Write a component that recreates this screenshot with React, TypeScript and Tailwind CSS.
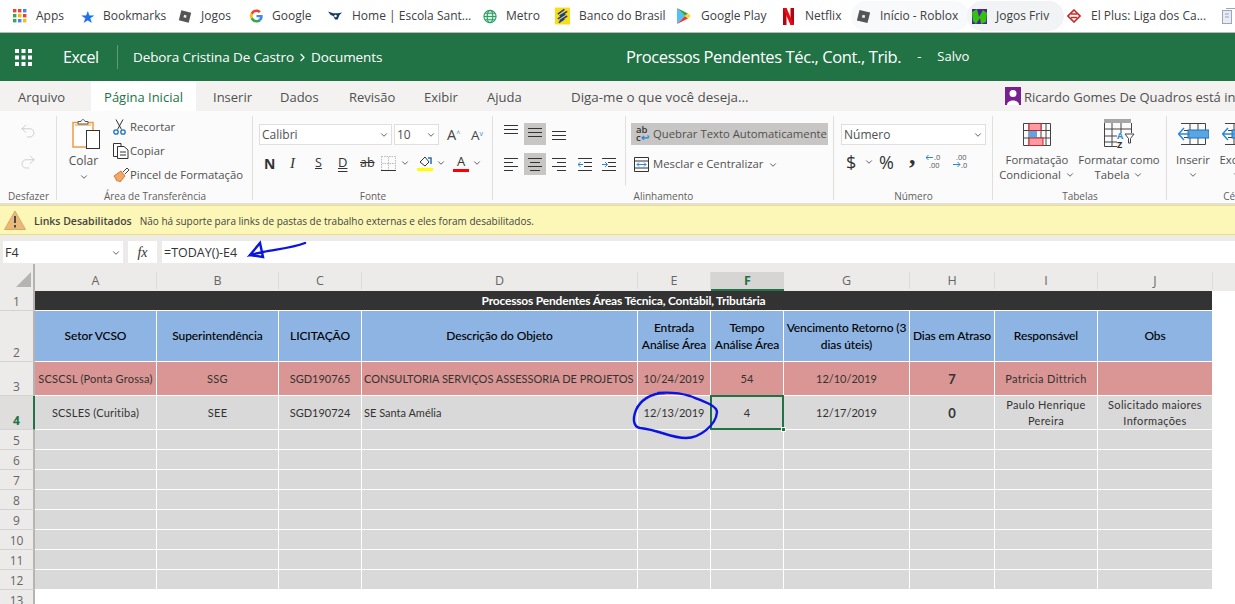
import { ChevronDown, ChevronRight, Redo2, Undo2 } from "lucide-react";
import type { ReactNode } from "react";

const ui = "font-['Open_Sans','Noto_Sans',sans-serif]";
const calibri = "font-['Lato','Liberation_Sans',sans-serif]";

const Chev = ({ className = "" }: { className?: string }) => (
  <ChevronDown size={10} strokeWidth={2} className={`shrink-0 text-[#444] ${className}`} />
);

const AppsDots = () => (
  <svg width="14" height="14" viewBox="0 0 14 14">
    {["#ea4335", "#ea4335", "#4285f4", "#34a853", "#fbbc04", "#ea4335", "#34a853", "#4285f4", "#fbbc04"].map((c, i) => (
      <rect key={i} x={(i % 3) * 5} y={Math.floor(i / 3) * 5} width="3.4" height="3.4" fill={c} />
    ))}
  </svg>
);

const RobloxIcon = () => (
  <svg width="17" height="17" viewBox="0 0 17 17">
    <path d="M4 1 16 4 13 16 1 13Z" fill="#555" />
    <path d="M7.5 6.5 10.5 7.3 9.7 10.3 6.7 9.5Z" fill="#eee" />
  </svg>
);

const GoogleIcon = () => (
  <svg width="14" height="14" viewBox="0 0 48 48">
    <path fill="#ea4335" d="M24 9.5c3.5 0 6.700 1.300 9.100 3.500l6.800-6.800C35.800 2.400 30.200 0 24 0 14.600 0 6.500 5.400 2.600 13.200l7.900 6.200C12.400 13.600 17.700 9.500 24 9.500z" />
    <path fill="#4285f4" d="M46.900 24.500c0-1.600-.1-3.100-.4-4.500H24v9h12.900c-.6 3-2.300 5.500-4.800 7.200l7.700 6c4.500-4.200 7.100-10.300 7.100-17.700z" />
    <path fill="#fbbc05" d="M10.500 28.600c-.5-1.400-.8-3-.8-4.600s.3-3.200.8-4.600l-7.900-6.200C.9 16.500 0 20.100 0 24s.9 7.500 2.600 10.800l7.900-6.200z" />
    <path fill="#34a853" d="M24 48c6.500 0 11.900-2.100 15.900-5.800l-7.700-6c-2.200 1.400-4.900 2.300-8.200 2.300-6.300 0-11.600-4.200-13.500-9.900l-7.900 6.200C6.500 42.600 14.600 48 24 48z" />
  </svg>
);

const SchoolIcon = () => (
  <svg width="17" height="12" viewBox="0 0 17 12">
    <path d="M0 1 6 3 9 3 11 3 16 2 13 5 11 10 8 10 6 6 3 5Z" fill="#1c3a66" />
    <circle cx="8.500" cy="6" r="1.500" fill="#fff" />
  </svg>
);

const GlobeIcon = () => (
  <svg width="15" height="15" viewBox="0 0 15 15" fill="none" stroke="#2e9e68" strokeWidth="1.200">
    <circle cx="7.500" cy="7.500" r="6.500" fill="#d8efe2" />
    <ellipse cx="7.500" cy="7.500" rx="3" ry="6.500" />
    <path d="M1 7.500H14M2 4H13M2 11H13" />
  </svg>
);

const BBIcon = () => (
  <svg width="16" height="18" viewBox="0 0 16 18">
    <rect width="16" height="18" fill="#f9dd16" />
    <path d="M3 7 10 2M5 9 13 4M3 12 11 7M5 14 13 9M4 16 10 12" stroke="#1c3f94" strokeWidth="1.600" />
  </svg>
);

const PlayIcon = () => (
  <svg width="14" height="16" viewBox="0 0 14 16">
    <path d="M0 0 8 8 0 16Z" fill="#4fc3f7" />
    <path d="M0 0 11 5.500 8 8Z" fill="#43a047" />
    <path d="M0 16 11 10.500 8 8Z" fill="#e53935" />
    <path d="M11 5.500 14 8 11 10.500 8 8Z" fill="#fdd835" />
  </svg>
);

const NetflixIcon = () => (
  <svg width="11" height="17" viewBox="0 0 11 17">
    <path d="M0 0H3.500V17H0ZM7.500 0H11V17H7.500Z" fill="#b1060f" />
    <path d="M0 0H3.500L11 17H7.500Z" fill="#e50914" />
  </svg>
);

const FrivIcon = () => (
  <svg width="15" height="15" viewBox="0 0 15 15">
    <rect width="15" height="15" fill="#4b1fa8" />
    <path d="M0 3 5 0 7 8 11 1 15 4 14 13 9 15 8 9 4 15 1 12Z" fill="#35c20c" />
  </svg>
);

const ElPlusIcon = () => (
  <svg width="14" height="14" viewBox="0 0 14 14" fill="none" stroke="#c62828" strokeWidth="1.600">
    <path d="M7 1 13 7 7 13 1 7Z" />
    <path d="M4 5H10M4 8.500H10" />
  </svg>
);

const DocIcon = () => (
  <svg width="14" height="16" viewBox="0 0 14 16" fill="none" stroke="#9aa6b8">
    <rect x="0.500" y="2.500" width="9" height="13" fill="#e8ecf2" />
    <path d="M4 .5H13.500V13M3 6H7M3 9H7" />
  </svg>
);

const bookmarks: { label?: string; icon: ReactNode; w: string; slot: string; pill?: string }[] = [
  { label: "Apps", icon: <AppsDots />, w: "w-[67px]", slot: "w-[14px]" },
  { label: "Bookmarks", icon: <span className="w-[14px] text-center text-[17px] leading-none text-[#1a73e8]">★</span>, w: "w-[98px]", slot: "w-[14px]" },
  { label: "Jogos", icon: <RobloxIcon />, w: "w-[72px]", slot: "w-[14px]" },
  { label: "Google", icon: <GoogleIcon />, w: "w-[78px]", slot: "w-[13px]" },
  { label: "Home | Escola Sant...", icon: <SchoolIcon />, w: "w-[155px]", slot: "w-[15px]" },
  { label: "Metro", icon: <GlobeIcon />, w: "w-[72px]", slot: "w-[14px]" },
  { label: "Banco do Brasil", icon: <BBIcon />, w: "w-[122px]", slot: "w-[15px]" },
  { label: "Google Play", icon: <PlayIcon />, w: "w-[106px]", slot: "w-[15px]" },
  { label: "Netflix", icon: <NetflixIcon />, w: "w-[73px]", slot: "w-[13px]" },
  { label: "Início - Roblox", icon: <RobloxIcon />, w: "w-[116px]", slot: "w-[15px]", pill: "bg-[#f8f9fa]" },
  { label: "Jogos Friv", icon: <FrivIcon />, w: "w-[95px]", slot: "w-[15px]", pill: "bg-[#f1f3f4]" },
  { label: "El Plus: Liga dos Ca...", icon: <ElPlusIcon />, w: "w-[155px]", slot: "w-[15px]" },
  { icon: <DocIcon />, w: "w-[20px]", slot: "w-[14px]" },
];

function BookmarkBar() {
  return (
    <div className={`flex h-[33px] items-center overflow-hidden border-b border-[#b9b9bb] bg-white pl-[13px] text-[12px] text-[#3c4043] ${ui}`}>
      {bookmarks.map((b, i) => (
        <div key={i} className={`relative flex shrink-0 items-center gap-[9px] ${b.w}`}>
          {b.pill && <span className={`absolute -left-[5px] -top-[6px] bottom-[-6px] right-[3px] rounded-full ${b.pill}`} />}
          <span className={`relative flex h-[18px] items-center ${b.slot}`}>{b.icon}</span>
          {b.label && <span className="relative whitespace-nowrap">{b.label}</span>}
        </div>
      ))}
    </div>
  );
}

function Waffle() {
  return (
    <svg width="17" height="17" viewBox="0 0 17 17" fill="#fff">
      {[0, 1, 2, 3, 4, 5, 6, 7, 8].map((i) => (
        <rect key={i} x={(i % 3) * 6.500} y={Math.floor(i / 3) * 6.500} width="4" height="4" />
      ))}
    </svg>
  );
}

function AppHeader() {
  return (
    <div className={`flex h-[48px] items-center bg-[#217346] text-white ${ui}`}>
      <div className="ml-[15px] flex w-[48px]"><Waffle /></div>
      <span className="w-[54px] text-[16px] tracking-[-0.5px]">Excel</span>
      <span className="h-[24px] w-px bg-[#5d9a79]" />
      <span className="ml-[15px] whitespace-nowrap text-[13.500px] tracking-[-0.1px]">Debora Cristina De Castro</span>
      <ChevronRight size={13} className="mx-[2px]" />
      <span className="w-[315px] text-[13.500px] tracking-[-0.1px]">Documents</span>
      <span className="whitespace-nowrap text-[16.500px] tracking-[-0.4px]">Processos Pendentes Téc., Cont., Trib.</span>
      <span className="ml-[16px] text-[13px]">-</span>
      <span className="ml-[16px] text-[13px]">Salvo</span>
    </div>
  );
}

function TabBar() {
  const tabs = [
    ["Arquivo", "w-[91px] pl-[18px]"],
    ["Página Inicial", "w-[105px] justify-center bg-white text-[#217346]"],
    ["Inserir", "w-[84px] pl-[17px]"],
    ["Dados", "w-[69px]"],
    ["Revisão", "w-[75px]"],
    ["Exibir", "w-[63px]"],
    ["Ajuda", "w-[84px]"],
  ];
  return (
    <div className={`flex h-[30px] items-center overflow-hidden bg-[#f3f2f1] text-[13px] text-[#505050] ${ui}`}>
      {tabs.map(([t, c]) => (
        <div key={t} className={`flex h-full shrink-0 items-center pt-[3px] ${c}`}>{t}</div>
      ))}
      <span className="mt-[3px] w-[434px] shrink-0 whitespace-nowrap text-[13.400px]">Diga-me o que você deseja...</span>
      <svg width="16" height="18" viewBox="0 0 16 18" className="shrink-0">
        <rect width="16" height="18" fill="#7a1f91" />
        <circle cx="8" cy="6.500" r="3.500" fill="#fff" />
        <path d="M2 18C2 12 14 12 14 18Z" fill="#fff" />
      </svg>
      <span className="ml-[3px] mt-[3px] whitespace-nowrap">Ricardo Gomes De Quadros está in</span>
    </div>
  );
}

function Group({ w, label, children, line = true }: { w: string; label: string; children: ReactNode; line?: boolean }) {
  return (
    <div className={`relative flex h-full shrink-0 flex-col ${w}`}>
      <div className="h-[78px]">{children}</div>
      <div className="whitespace-nowrap text-center text-[10px] leading-[14px] text-[#605e5c]">{label}</div>
      {line && <span className="absolute bottom-[3px] right-0 top-[5px] w-px bg-[#e1dfdd]" />}
    </div>
  );
}

const Lines = ({ rows }: { rows: [number, number][] }) => (
  <svg width="14" height="14" viewBox="0 0 14 14" stroke="#333">
    {rows.map(([a, b], i) => (
      <path key={i} d={`M${a} ${i * 4 + 1.500}H${b}`} />
    ))}
  </svg>
);

const ClipboardIcon = () => (
  <svg width="29" height="33" viewBox="0 0 29 33" fill="none">
    <path d="M1 4.500H21V29H1Z" fill="#fff" stroke="#ef9a45" strokeWidth="1.500" />
    <path d="M3 7H19" stroke="#f7c897" strokeWidth="2" />
    <path d="M6 6V3.500H9C9.500 1 12.500 1 13 3.500H16V6Z" fill="#fff" stroke="#555" />
    <rect x="14.500" y="12.500" width="13" height="18" fill="#fff" stroke="#333" />
  </svg>
);

const ScissorsIcon = () => (
  <svg width="13" height="16" viewBox="0 0 13 16" fill="none">
    <path d="M3 .5 8.500 10.500M10 .5 4.500 10.500" stroke="#333" />
    <circle cx="3" cy="13" r="2.200" stroke="#1d72bb" strokeWidth="1.300" />
    <circle cx="10" cy="13" r="2.200" stroke="#1d72bb" strokeWidth="1.300" />
  </svg>
);

const CopyIcon = () => (
  <svg width="16" height="16" viewBox="0 0 16 16" fill="none" stroke="#333">
    <path d="M4.500 13.500H.5V.5H8V3" />
    <path d="M4.500 3.500H11L15 7V15.500H4.500ZM7 9H13M7 12H13" fill="#fff" />
  </svg>
);

const BrushIcon = () => (
  <svg width="17" height="16" viewBox="0 0 17 16">
    <path d="M1 9 8 4 12 9 7 15C5 13 3 15 3 12Z" fill="#f2a868" stroke="#d9772a" />
    <path d="M10 5 14 1 16 3 12 7" fill="#fff" stroke="#444" />
  </svg>
);

function Clipboard() {
  return (
    <div className="flex pt-[7px]">
      <div className="flex w-[53px] flex-col items-center">
        <span className="ml-[5px] flex"><ClipboardIcon /></span>
        <span className="mt-[2px] text-[12px] leading-[16px] text-[#505050]">Colar</span>
        <Chev className="mt-[3px]" />
      </div>
      <div className="ml-[3px] flex flex-col gap-[7px] text-[11.300px] leading-[17px] text-[#505050]">
        {[
          [<ScissorsIcon key="s" />, "Recortar"],
          [<CopyIcon key="c" />, "Copiar"],
          [<BrushIcon key="b" />, "Pincel de Formatação"],
        ].map(([icon, label], i) => (
          <div key={i} className="flex items-center whitespace-nowrap">
            <span className="flex w-[17px]">{icon}</span>
            <span>{label}</span>
          </div>
        ))}
      </div>
    </div>
  );
}

function Select({ w, text }: { w: string; text: string }) {
  return (
    <div className={`flex h-[21px] items-center justify-between border border-[#e1dfdd] bg-white px-[2px] text-[12px] text-[#505050] ${w}`}>
      <span>{text}</span>
      <Chev />
    </div>
  );
}

function FontGroup() {
  return (
    <div className="pl-[6px] pt-[13px]">
      <div className="flex items-center">
        <Select w="w-[133px]" text="Calibri" />
        <Select w="w-[45px] ml-[2px]" text="10" />
        <span className="ml-[8px] w-[24px] text-[14.500px] leading-[18px] text-[#444]">A<sup className="text-[7px] text-[#2b88d8]">^</sup></span>
        <span className="text-[13.500px] leading-[18px] text-[#444]">A<sup className="text-[7px] text-[#2b88d8]">v</sup></span>
      </div>
      <div className="mt-[7px] flex h-[22px] items-center text-[#333]">
        <span className="w-[24px] pl-[5px] text-[14px] font-bold">N</span>
        <span className="w-[25px] pl-[7px] font-['Liberation_Serif',serif] text-[15px] italic">I</span>
        <span className="w-[24px] pl-[7px] text-[12.500px] underline">S</span>
        <span className="w-[24px] pl-[6px] text-[13px] underline decoration-double">D</span>
        <span className="w-[25px] pl-[4px] text-[12.500px] line-through">ab</span>
        <svg width="15" height="15" viewBox="0 0 15 15" fill="none" stroke="#bbb" strokeDasharray="1.500 1">
          <path d="M.5.5H14.500V14M.5.5V14M7.500 1V14M1 7.500H14" />
          <path d="M0 14.500H15" stroke="#333" strokeDasharray="none" />
        </svg>
        <Chev className="ml-[4px]" />
        <svg width="16" height="16" viewBox="0 0 16 16" className="ml-[7px]">
          <path d="M3 7 8 2 12 7 8 11Z" fill="#fff" stroke="#333" />
          <path d="M11 3 14 3 14 9" fill="none" stroke="#1d72bb" strokeWidth="1.500" />
          <rect x="0" y="13" width="16" height="3" fill="#ffff00" />
        </svg>
        <Chev className="ml-[3px]" />
        <div className="ml-[7px] flex w-[16px] flex-col items-center text-[13px] leading-[13px] text-[#333]">
          A
          <span className="mt-[1px] h-[3px] w-[16px] bg-[#ff0000]" />
        </div>
        <Chev className="ml-[3px]" />
      </div>
    </div>
  );
}

const alignCell = "flex h-[22px] w-[22px] items-center justify-center";

function AlignGroup() {
  const three: [number, number][] = [[0, 14], [0, 14], [0, 14]];
  const left: [number, number][] = [[0, 14], [0, 9], [0, 14], [0, 9]];
  const center: [number, number][] = [[0, 14], [2, 12], [0, 14], [2, 12]];
  const right: [number, number][] = [[0, 14], [5, 14], [0, 14], [5, 14]];
  const Indent = ({ flip, className }: { flip?: boolean; className: string }) => (
    <svg width="14" height="14" viewBox="0 0 14 14" fill="none" stroke="#333" className={className}>
      <path d="M0 1.500H14M6 5.500H14M6 9.500H14M0 13.500H14" />
      <path d={flip ? "M0 7.500H5M3 5 5.500 7.500 3 10" : "M5 7.500H0M2.500 5 0 7.500 2.500 10"} stroke="#2b88d8" />
    </svg>
  );
  return (
    <div className="relative flex pl-[11px] pt-[12px]">
      <div className="w-[127px]">
        <div className="flex h-[22px] items-center gap-[6px]">
          <div className="flex w-[14px] pb-[6px]"><Lines rows={three} /></div>
          <div className={`${alignCell} bg-[#c8c6c4]`}><Lines rows={three} /></div>
          <div className="flex w-[14px] pt-[6px]"><Lines rows={three} /></div>
        </div>
        <div className="mt-[8px] flex h-[22px] items-center gap-[6px]">
          <Lines rows={left} />
          <div className={`${alignCell} bg-[#c8c6c4]`}><Lines rows={center} /></div>
          <Lines rows={right} />
          <Indent className="ml-[6px]" />
          <Indent flip className="ml-[4px]" />
        </div>
      </div>
      <div className="flex flex-col text-[11.300px] text-[#505050]">
        <div className="flex h-[22px] w-[197px] items-center whitespace-nowrap bg-[#c8c6c4] pl-[5px]">
          <span className="w-[17px] text-[9.500px] font-semibold leading-[8px] text-[#333]">ab<br />c<span className="text-[#2b88d8]">↩</span></span>
          <span>Quebrar Texto Automaticamente</span>
        </div>
        <div className="mt-[8px] flex h-[22px] items-center whitespace-nowrap pl-[3px] pt-[1px]">
          <svg width="15" height="15" viewBox="0 0 15 15" fill="none" className="mr-[4px]">
            <path d="M.5.5H14.500V14.500H.5ZM.5 4H14.500M.5 11H14.500" stroke="#333" />
            <path d="M3 7.500H12M5 5.500 3 7.500 5 9.500M10 5.500 12 7.500 10 9.500" stroke="#2b88d8" />
          </svg>
          Mesclar e Centralizar
          <Chev className="ml-[5px]" />
        </div>
      </div>
      <span className="absolute left-[132px] top-[5px] h-[70px] w-px bg-[#e1dfdd]" />
    </div>
  );
}

const DecimalIcon = ({ more }: { more?: boolean }) => (
  <svg width="16" height="16" viewBox="0 0 16 16" fill="none" fontSize="7.500" fontFamily="'Open Sans',sans-serif">
    {more ? (
      <>
        <text x="3" y="6" fill="#555">.00</text>
        <path d="M0 10.500H7M4.500 8 7 10.500 4.500 13" stroke="#2b88d8" />
        <text x="8" y="14" fill="#555">.0</text>
      </>
    ) : (
      <>
        <path d="M7 3.500H0M2.500 1 0 3.500 2.500 6" stroke="#2b88d8" />
        <text x="8" y="6" fill="#555">.0</text>
        <text x="3" y="14" fill="#555">.00</text>
      </>
    )}
  </svg>
);

function NumberGroup() {
  return (
    <div className="pl-[7px] pt-[13px]">
      <Select w="w-[145px]" text="Número" />
      <div className="mt-[5px] flex h-[24px] items-center text-[#333]">
        <span className="ml-[5px] w-[18px] text-[18px]">$</span>
        <Chev />
        <span className="ml-[5px] w-[30px] text-[18px]">%</span>
        <span className="w-[17px] pb-[12px] font-['Liberation_Serif',serif] text-[26px] font-bold leading-[16px]">,</span>
        <DecimalIcon />
        <span className="w-[11px]" />
        <DecimalIcon more />
      </div>
    </div>
  );
}

const CondIcon = () => (
  <svg width="28" height="23" viewBox="0 0 28 23" fill="none">
    <path d="M.5.5H27.500V22.500H.5ZM.5 7.500H27.500M.5 15H27.500M6 .5V22.500M18 .5V22.500M23 .5V22.500" stroke="#444" />
    <rect x="6" y=".5" width="12" height="7" fill="#ff9aa2" stroke="#c72525" />
    <rect x="6" y="8" width="8" height="7" fill="#5aa5e2" />
    <rect x="6" y="15" width="14" height="7.500" fill="#ff9aa2" stroke="#c72525" />
  </svg>
);

const TableIcon = () => (
  <svg width="31" height="30" viewBox="0 0 31 30" fill="none">
    <rect x="0" y="0" width="27" height="4" fill="#a6a6a6" />
    <path d="M.5 4V27.500H13M27.500 4V14M.5 10H27M.5 17H13M.5 23H13M8 4V27M17 4V14" stroke="#444" />
    <path d="M21 15H30L26.500 19.500V24H24.500V19.500Z" stroke="#444" fill="#fff" />
    <text x="13" y="20" fontSize="9" fontWeight="700" fill="#2b88d8" fontFamily="'Open Sans',sans-serif">A</text>
    <text x="13" y="29" fontSize="9" fontWeight="700" fill="#333" fontFamily="'Open Sans',sans-serif">Z</text>
  </svg>
);

const InsertIcon = () => (
  <svg width="31" height="22" viewBox="0 0 31 22" fill="none">
    <path d="M3 .5H27.500V21.500H3M3 7.500H27.500M3 14.500H27.500M12 .5V21.500M20 .5V21.500" stroke="#444" />
    <rect x="10" y="7" width="21" height="8" fill="#5aa5e2" stroke="#1d72bb" />
    <path d="M12 11H1M6 5 .5 11 6 17" stroke="#2b88d8" strokeWidth="1.500" fill="#fff" />
  </svg>
);

function BigButton({ w, icon, lines }: { w: string; icon: ReactNode; lines: ReactNode[] }) {
  return (
    <div className={`flex shrink-0 flex-col items-center text-[11.300px] leading-[15px] text-[#505050] ${w}`}>
      <div className="mb-[2px] flex h-[32px] items-center justify-center">{icon}</div>
      {lines.map((l, i) => (
        <div key={i} className="flex items-center gap-[4px] whitespace-nowrap">{l}</div>
      ))}
    </div>
  );
}

function Ribbon() {
  return (
    <div className={`flex h-[94px] overflow-hidden border-b-2 border-[#e1dfdd] bg-[#fbfbfb] ${ui}`}>
      <Group w="w-[57px]" label="Desfazer">
        <div className="flex flex-col items-center gap-[13px] pr-[1px] pt-[11px] text-[#c8c6c4]">
          <Undo2 size={18} strokeWidth={1.100} />
          <Redo2 size={18} strokeWidth={1.100} />
        </div>
      </Group>
      <Group w="w-[196px]" label="Área de Transferência"><Clipboard /></Group>
      <Group w="w-[240px]" label="Fonte"><FontGroup /></Group>
      <Group w="w-[341px]" label="Alinhamento"><AlignGroup /></Group>
      <Group w="w-[159px]" label="Número"><NumberGroup /></Group>
      <Group w="w-[174px]" label="Tabelas">
        <div className="flex pt-[7px]">
          <BigButton w="w-[88px]" icon={<CondIcon />} lines={["Formatação", <>Condicional <Chev /></>]} />
          <BigButton w="w-[76px]" icon={<TableIcon />} lines={["Formatar como", <>Tabela <Chev /></>]} />
        </div>
      </Group>
      <Group w="w-[146px]" label="Células" line={false}>
        <div className="flex pt-[7px]">
          <BigButton w="w-[52px]" icon={<InsertIcon />} lines={["Inserir", <Chev key="c" className="mt-[3px]" />]} />
          <BigButton w="w-[36px]" icon={<InsertIcon />} lines={["Excluir", <Chev key="c" className="mt-[3px]" />]} />
        </div>
      </Group>
    </div>
  );
}

function Notice() {
  return (
    <div className={`flex h-[30px] items-center border-y border-[#ecdf7e] bg-[#fcf7b6] pl-[4px] text-[#444] ${ui}`}>
      <svg width="22" height="20" viewBox="0 0 22 20" className="mr-[8px]">
        <path d="M11 1 21.500 19.500H.5Z" fill="#e9b97a" stroke="#d9a766" strokeLinejoin="round" />
        <path d="M11 6V13M11 15V17.500" stroke="#4a4a4a" strokeWidth="2" />
      </svg>
      <b className="mr-[8px] mt-[3px] text-[10.500px] font-semibold">Links Desabilitados</b>
      <span className="mt-[3px] text-[10px]">Não há suporte para links de pastas de trabalho externas e eles foram desabilitados.</span>
    </div>
  );
}

function FormulaBar() {
  return (
    <div className={`flex h-[29px] items-end gap-[5px] bg-[#ecebea] pb-px pl-[3px] text-[12.500px] text-[#333] ${ui}`}>
      <div className="flex h-[22px] w-[120px] items-center justify-between bg-white px-[2px] pt-[2px]">
        F4 <Chev />
      </div>
      <div className="flex h-[22px] w-[29px] items-center justify-center bg-white font-['Liberation_Serif',serif] text-[14px] italic">fx</div>
      <div className="flex h-[22px] flex-1 items-center bg-white pl-[2px] pt-[3px]">=TODAY()-E4</div>
    </div>
  );
}

const columns = "grid-cols-[35px_122px_122px_83px_276px_73px_73px_126px_85px_103px_115px_23px]";
const rowsTpl = "grid-rows-[27px_20px_51px_34px_34px_20px_20px_20px_20px_20px_20px_20px_20px_20px]";

const colLetters = ["A", "B", "C", "D", "E", "F", "G", "H", "I", "J"];

const headerRow = [
  "Setor VCSO",
  "Superintendência",
  "LICITAÇÃO",
  "Descrição do Objeto",
  <>Entrada<br />Análise Área</>,
  <>Tempo<br />Análise Área</>,
  <>Vencimento Retorno (3<br />dias úteis)</>,
  "Dias em Atraso",
  "Responsável",
  "Obs",
];

const redRow: ReactNode[] = [
  "SCSCSL (Ponta Grossa)", "SSG", "SGD190765",
  "CONSULTORIA SERVIÇOS ASSESSORIA DE PROJETOS",
  "10/24/2019", "54", "12/10/2019", "7", "Patricia Dittrich", "",
];

const greyRow: ReactNode[] = [
  "SCSLES (Curitiba)", "SEE", "SGD190724", "SE Santa Amélia",
  "12/13/2019", "4", "12/17/2019", "0",
  <>Paulo Henrique<br />Pereira</>,
  <>Solicitado maiores<br />Informações</>,
];

const cellTracking = [
  "tracking-[0.2px]", "tracking-[0.35px]", "tracking-normal", "tracking-normal", "tracking-normal",
  "tracking-normal", "tracking-normal", "tracking-normal", "tracking-[0.35px]", "tracking-[0.35px]",
];

function RowNum({ n, active }: { n: number; active?: boolean }) {
  return (
    <div className={`flex items-end justify-center border-b border-[#d4d3d2] pb-px text-[12px] leading-[15px] ${ui} ${active ? "border-r-2 border-r-[#217346] bg-[#dfdedd] font-bold text-[#217346]" : "border-r-2 border-r-[#b5b4b3] bg-[#ecebea] text-[#666]"}`}>
      {n}
    </div>
  );
}

function DataRow({ n, cells, bg, active }: { n: number; cells: ReactNode[]; bg: string; active?: boolean }) {
  return (
    <>
      <RowNum n={n} active={active} />
      {cells.map((c, i) => (
        <div
          key={i}
          className={`relative flex items-center whitespace-nowrap border-b border-r border-white text-[11px] leading-[16px] text-[#333] ${bg} ${cellTracking[i]} ${i === 3 ? "justify-start pl-[2px]" : "justify-center text-center"} ${i === 7 ? "text-[13px] font-bold" : ""}`}
        >
          {c}
          {active && i === 5 && (
            <>
              <span className="absolute -left-px -top-px bottom-[-1px] right-[-1px] z-10 border-2 border-[#217346]" />
              <span className="absolute bottom-[-3px] right-[-3px] z-10 h-[5px] w-[5px] border border-white bg-[#217346]" />
            </>
          )}
        </div>
      ))}
      <div className="bg-white" />
    </>
  );
}

function Sheet() {
  return (
    <div className={`grid h-[340px] ${columns} ${rowsTpl} ${calibri}`}>
      <div className="flex items-end justify-end border-r-2 border-[#b5b4b3] bg-[#ecebea] pb-[4px] pr-[2px]">
        <span className="h-0 w-0 border-b-[15px] border-l-[15px] border-b-[#b5b4b3] border-l-transparent" />
      </div>
      {colLetters.map((l) => (
        <div key={l} className={`flex items-end bg-[#ecebea] text-[12.500px] ${ui} ${l === "F" ? "" : "pb-[2px]"}`}>
          {l === "F" ? (
            <span className="h-[19px] w-full border-b-2 border-[#217346] bg-[#d6d5d4] text-center font-bold leading-[17px] text-[#217346]">{l}</span>
          ) : (
            <span className="h-[17px] w-full border-r border-[#dcdbda] text-center leading-[17px] text-[#666]">{l}</span>
          )}
        </div>
      ))}
      <div className="bg-[#ecebea]" />

      <RowNum n={1} />
      <div className="col-span-10 flex items-center justify-center border-b border-r border-white bg-[#333] text-[12px] font-bold tracking-[-0.2px] text-white">
        Processos Pendentes Áreas Técnica, Contábil, Tributária
      </div>
      <div className="bg-white" />

      <RowNum n={2} />
      {headerRow.map((h, i) => (
        <div key={i} className="flex items-center justify-center whitespace-nowrap border-b border-r border-white bg-[#8db4e2] pb-px text-center text-[12px] font-medium leading-[17px] tracking-[-0.1px] text-black">
          {h}
        </div>
      ))}
      <div className="bg-white" />

      <DataRow n={3} cells={redRow} bg="bg-[#da9694]" />
      <DataRow n={4} cells={greyRow} bg="bg-[#d9d9d9]" active />
      {[5, 6, 7, 8, 9, 10, 11, 12].map((n) => (
        <DataRow key={n} n={n} cells={colLetters.map(() => "")} bg="bg-[#d9d9d9]" />
      ))}
      <RowNum n={13} />
    </div>
  );
}

export default function App() {
  return (
    <div className="relative h-[604px] w-[1235px] overflow-hidden bg-white">
      <BookmarkBar />
      <AppHeader />
      <TabBar />
      <Ribbon />
      <Notice />
      <FormulaBar />
      <Sheet />
      {/* caneta azul por cima da planilha */}
      <svg width="1235" height="604" viewBox="0 0 1235 604" fill="none" stroke="#0a14e0" strokeWidth="2.400" strokeLinecap="round" className="pointer-events-none absolute left-0 top-0 z-20">
        <path d="M305 243C292 248 278 249 263 252L250 255L260 243L263 257L250 255" />
        <path d="M665 393C650 393 640 401 636 410C632 420 634 427 640 428C660 430 670 438 686 438C700 438 716 425 717 412C717 405 700 400 690 396C680 393 670 392 658 393" />
      </svg>
    </div>
  );
}
